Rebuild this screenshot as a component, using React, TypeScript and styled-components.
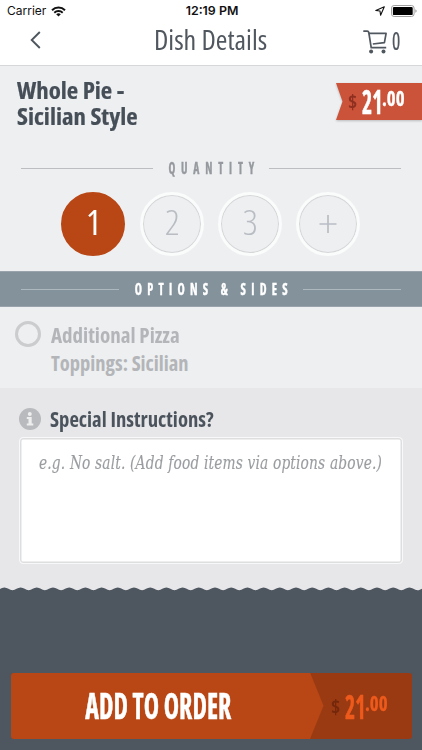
import React from 'react';
import styled, { createGlobalStyle } from 'styled-components';

const GlobalStyle = createGlobalStyle`
  * { box-sizing: border-box; }
  html, body { margin: 0; background: #4e565f; }
  body { font-family: "Open Sans", sans-serif; font-stretch: 75%; }
`;

const Screen = styled.div`
  width: 422px;
  height: 750px;
  overflow: hidden;
  display: flex;
  flex-direction: column;
  background: #4e565f;
`;

/* Text set in a face narrower or wider than the installed cut. */
const Type = styled.span<{
  $size: number;
  $weight?: number;
  $scale?: number;
  $color?: string;
  $track?: number;
  $line?: number;
  $origin?: string;
  $stroke?: number;
}>`
  display: block;
  flex: none;
  white-space: nowrap;
  font-size: ${p => p.$size}px;
  font-weight: ${p => p.$weight ?? 700};
  line-height: ${p => p.$line ?? 24}px;
  letter-spacing: ${p => p.$track ?? 0}px;
  color: ${p => p.$color ?? '#464e57'};
  -webkit-text-stroke: ${p => p.$stroke ?? 0}px currentColor;
  transform: scaleX(${p => p.$scale ?? 1});
  transform-origin: ${p => p.$origin ?? 'left'} center;
`;

const StatusBar = styled.div`
  height: 22px;
  flex: none;
  display: grid;
  grid-template-columns: 1fr auto 1fr;
  align-items: center;
  padding: 0 5px 0 7px;
  background: #fff;
  font: 400 12px/22px Inter, sans-serif;
  color: #111;
`;
const Carrier = styled.div`
  display: flex;
  align-items: center;
  gap: 5px;
`;
const Clock = styled.div`
  font-size: 12.4px;
  font-weight: 600;
`;
const Indicators = styled.div`
  display: flex;
  justify-content: flex-end;
  align-items: center;
  gap: 6px;
`;

const Header = styled.header`
  height: 44px;
  flex: none;
  padding: 0 21px 9px 30px;
  display: grid;
  grid-template-columns: 120px 1fr 60px;
  align-items: center;
  background: #fff;
  border-bottom: 1px solid #d6d7d9;
`;
const Back = styled.div`
  display: flex;
`;
const Title = styled.div`
  padding-left: 4px;
`;
const Cart = styled.div`
  display: flex;
  justify-content: flex-end;
  align-items: center;
  gap: 5px;
  & > svg { margin-top: 3px; }
  & > span { width: 9px; }
`;

const Dish = styled.section`
  height: 205px;
  flex: none;
  padding-top: 12px;
  background: #edeff1;
`;
const DishTop = styled.div`
  display: grid;
  grid-template-columns: 1fr 86px;
  height: 51px;
  padding-left: 16.5px;
`;
const Ribbon = styled.div`
  margin-top: 5px;
  height: 37px;
  filter: drop-shadow(0 1px 1px rgba(0, 0, 0, 0.22));
`;
const RibbonFace = styled.div`
  height: 100%;
  padding-left: 11.5px;
  background: #cb533a;
  clip-path: polygon(0 0, 100% 0, 100% 100%, 0 100%, 6.5px 50%);
`;
const PriceRow = styled.div`
  display: grid;
  grid-template-columns: 14px 20.5px auto;
  height: 37px;
  align-items: start;
`;

const Rule = styled.div<{ $slot: number; $color: string }>`
  flex: none;
  height: 20px;
  padding: 0 21px;
  display: grid;
  grid-template-columns: 1fr ${p => p.$slot}px 1fr;
  align-items: center;
  justify-items: center;
  &::before, &::after {
    content: "";
    width: 100%;
    height: 1px;
    background: ${p => p.$color};
  }
  & > span { padding-left: 8px; }
`;
const QuantityHeading = styled.div`
  margin-top: 29px;
`;

const Quantities = styled.div`
  display: flex;
  gap: 14.4px;
  padding: 13.5px 0 0 61.3px;
`;
const Quantity = styled.div<{ $on?: boolean }>`
  width: 64px;
  height: 64px;
  border-radius: 50%;
  display: flex;
  justify-content: center;
  align-items: center;
  border: 3px solid ${p => (p.$on ? '#b84715' : '#fafbfb')};
  background: ${p => (p.$on ? '#b84715' : 'transparent')};
  box-shadow: ${p => (p.$on ? 'none' : 'inset 0 0 0 1px #d5d6d8')};
  & > span { margin-top: -4px; }
`;

const OptionsBar = styled.div`
  height: 36px;
  flex: none;
  padding-top: 7px;
  background: #84929c;
  border-top: 1px solid #98a3ab;
  border-bottom: 1px solid #98a3ab;
`;
const OptionRow = styled.div`
  height: 81px;
  flex: none;
  display: flex;
  gap: 10px;
  padding: 13.5px 0 0 15px;
  background: #edeff1;
`;
const Radio = styled.div`
  width: 26px;
  height: 26px;
  border-radius: 50%;
  border: 3px solid #cbccce;
`;

const Notes = styled.section`
  height: 199px;
  flex: none;
  padding: 18.5px 19px 0;
  background: #e7e7e9;
`;
const NotesHeading = styled.div`
  display: flex;
  align-items: center;
  gap: 9px;
  height: 24px;
  margin-bottom: 6.5px;
`;
const NotesField = styled.div`
  height: 127px;
  padding: 11px 0 0 18.5px;
  border: 1.5px solid #f8f8f8;
  border-radius: 4px;
  background: #fff;
  box-shadow: inset 0 0 0 1.5px #dddee0;
  font-family: "DejaVu Serif", serif;
  font-style: italic;
`;

const Edge = styled.svg`
  display: block;
  flex: none;
  background: #e7e7e9;
`;

const OrderButton = styled.div`
  margin: 80.5px 10.5px 0;
  height: 66.5px;
  flex: none;
  display: grid;
  grid-template-columns: 313px 1fr;
  border-radius: 3px;
  overflow: hidden;
  background: #9a3a13;
`;
const OrderLabel = styled.div`
  display: flex;
  justify-content: center;
  padding: 9.5px 17px 0 0;
  background: #b84715;
  clip-path: polygon(0 0, 299.5px 0, 100% 50%, 299.5px 100%, 0 100%);
`;
const OrderPrice = styled.div`
  padding: 15px 0 0 7px;
`;

function Price({ sign, main, cents }: { sign: string; main: string; cents: string }) {
  return (
    <PriceRow>
      <Type $size={20} $scale={0.98} $color={sign} $line={37}>$</Type>
      <Type $size={33} $scale={0.66} $stroke={0.5} $color={main} $line={38}>21</Type>
      <Type $size={21} $scale={0.9} $stroke={0.3} $color={cents} $line={30}>.00</Type>
    </PriceRow>
  );
}

const waves = 27;
const step = 16.2;
const wavePath =
  'M-3.7 3.2' +
  Array.from({ length: waves }, () => `c3 0 5 -2.6 ${step / 2} -2.6s5.1 2.6 ${step / 2} 2.6`).join('') +
  'V5H-4Z';

export default function App() {
  return (
    <Screen>
      <GlobalStyle />
      <StatusBar>
        <Carrier>
          Carrier
          <svg width="15" height="11" viewBox="0 0 15 11" fill="none" stroke="#111">
            <path d="M1 4.2a9.3 9.3 0 0 1 13 0" strokeWidth="2" />
            <path d="M3.3 6.7a6 6 0 0 1 8.4 0" strokeWidth="1.9" />
            <path d="M7.5 10.6 5.2 8.2a3.4 3.4 0 0 1 4.6 0Z" fill="#111" stroke="none" />
          </svg>
        </Carrier>
        <Clock>12:19 PM</Clock>
        <Indicators>
          <svg width="10" height="10" viewBox="0 0 10 10" fill="none" stroke="#111" strokeWidth="1.1" strokeLinejoin="round">
            <path d="M9.3.8 5.6 9.2 5 5 .8 4.5Z" />
          </svg>
          <svg width="26" height="12" viewBox="0 0 26 12">
            <rect x=".5" y=".5" width="22.6" height="11" rx="2.6" fill="none" stroke="#a0a0a0" />
            <rect x="1.9" y="1.9" width="19.8" height="8.2" rx="1.2" fill="#000" />
            <path d="M24.3 4.2q1.4.6 1.4 1.8t-1.4 1.8Z" fill="#a0a0a0" />
          </svg>
        </Indicators>
      </StatusBar>

      <Header>
        <Back>
          <svg width="11" height="18" viewBox="0 0 11 18" fill="none" stroke="#4e565f" strokeWidth="1.9">
            <path d="M9.8 1 1.7 9l8.1 8" />
          </svg>
        </Back>
        <Title>
          <Type $size={27} $weight={370} $scale={1.04} $color="#50575f" $line={36}>Dish Details</Type>
        </Title>
        <Cart>
          <svg width="24" height="24" viewBox="0 0 24 24" fill="none" stroke="#50575f" strokeWidth="1.7">
            <path d="M.3 1.1h3.9q1.3 0 1.6 1.4l2.4 15.2h15" />
            <path d="M5.8 3.4h17.3l-1.7 9.2L9.8 14" strokeLinejoin="round" />
            <circle cx="8.1" cy="21.6" r="2" fill="#50575f" stroke="none" />
            <circle cx="20.5" cy="21.6" r="2" fill="#50575f" stroke="none" />
          </svg>
          <Type $size={25} $weight={500} $scale={0.78} $stroke={0.2} $color="#50575f" $line={36}>0</Type>
        </Cart>
      </Header>

      <Dish>
        <DishTop>
          <div>
            <Type $size={23} $scale={1.08} $stroke={0.2} $line={25.6}>Whole Pie -</Type>
            <Type $size={23} $scale={1.08} $stroke={0.2} $line={25.6}>Sicilian Style</Type>
          </div>
          <Ribbon>
            <RibbonFace>
              <Price sign="#8f2f20" main="#fff" cents="#fff" />
            </RibbonFace>
          </Ribbon>
        </DishTop>
        <QuantityHeading>
          <Rule $slot={116} $color="#bcbdc0">
            <Type $size={16.5} $scale={0.7} $track={8.3} $stroke={0.4} $origin="center" $color="#96999e" $line={20}>QUANTITY</Type>
          </Rule>
        </QuantityHeading>
        <Quantities>
          <Quantity $on><Type $size={35} $weight={400} $scale={1.02} $color="#fff" $line={40}>1</Type></Quantity>
          <Quantity><Type $size={35} $weight={300} $scale={1.05} $origin="center" $color="#b9bdc3" $line={40}>2</Type></Quantity>
          <Quantity><Type $size={35} $weight={300} $scale={1.05} $origin="center" $color="#b9bdc3" $line={40}>3</Type></Quantity>
          <Quantity>
            <svg width="18" height="18" viewBox="0 0 18 18" stroke="#b9bdc3" strokeWidth="1.7">
              <path d="M9 0v18M.5 9h17" />
            </svg>
          </Quantity>
        </Quantities>
      </Dish>

      <OptionsBar>
        <Rule $slot={184} $color="#adb7be">
          <Type $size={16.5} $scale={0.74} $track={7.1} $stroke={0.4} $origin="center" $color="#fff" $line={20}>OPTIONS &amp; SIDES</Type>
        </Rule>
      </OptionsBar>
      <OptionRow>
        <Radio />
        <div>
          <Type $size={20.5} $weight={680} $scale={1.025} $color="#b3b5b8" $line={28}>Additional Pizza</Type>
          <Type $size={20.5} $weight={680} $color="#b3b5b8" $line={28}>Toppings: Sicilian</Type>
        </div>
      </OptionRow>

      <Notes>
        <NotesHeading>
          <svg width="22" height="22" viewBox="0 0 22 22">
            <circle cx="11" cy="11" r="11" fill="#b9babd" />
            <circle cx="10.8" cy="6" r="2" fill="#eeeeef" />
            <path d="M7.8 9h4.9v6.5h1.6v1.9H7.8v-1.9h1.7v-4.6H7.8Z" fill="#eeeeef" />
          </svg>
          <Type $size={20.5} $scale={1.008} $color="#4b535c">Special Instructions?</Type>
        </NotesHeading>
        <NotesField>
          <Type $size={18} $weight={400} $scale={0.85} $track={0.2} $stroke={0.15} $color="#9a9da0" $line={28}>
            e.g. No salt. (Add food items via options above.)
          </Type>
        </NotesField>
      </Notes>
      <Edge width="422" height="5" viewBox="0 0 422 5">
        <path d={wavePath} fill="#4e565f" />
      </Edge>

      <OrderButton>
        <OrderLabel>
          <Type $size={36} $scale={0.72} $stroke={0.5} $origin="center" $color="#fff" $line={48}>ADD TO ORDER</Type>
        </OrderLabel>
        <OrderPrice>
          <Price sign="#74270b" main="#ee5a1c" cents="#ee5a1c" />
        </OrderPrice>
      </OrderButton>
    </Screen>
  );
}
